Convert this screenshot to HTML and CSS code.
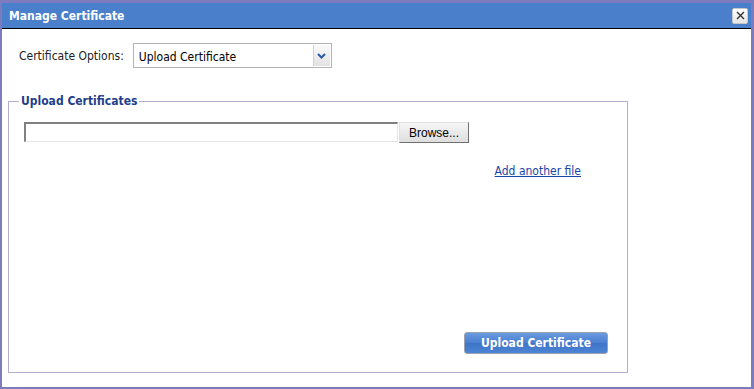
FILE: index.html
```html
<!DOCTYPE html>
<html lang="en">
<head>
    <meta charset="UTF-8">
    <title>Manage Certificate</title>
    <link rel="stylesheet" href="styles.css">
</head>
<body>

    <div class="window">
        <!-- Title bar -->
        <div class="titlebar">
            <span class="title">Manage Certificate</span>
            <span class="close">
                <svg width="9" height="9" viewBox="0 0 9 9"><path d="M1 1L8 8M8 1L1 8" stroke="#333" stroke-width="1.4"/></svg>
            </span>
        </div>

        <div class="content">
            <div class="options">
                <label>Certificate Options:</label>
                <div class="select">
                    <span class="select-text">Upload Certificate</span>
                    <span class="select-arrow">
                        <svg width="9" height="6" viewBox="0 0 9 6"><path d="M1 1L4.5 4.5L8 1" fill="none" stroke="#2b5aa8" stroke-width="2"/></svg>
                    </span>
                </div>
            </div>

            <fieldset class="upload">
                <legend>Upload Certificates</legend>
                <div class="file-row">
                    <div class="file-box"></div>
                    <button class="browse">Browse...</button>
                </div>
                <div class="add-row">
                    <a href="#" class="add-link">Add another file</a>
                </div>
                <div class="submit-row">
                    <button class="upload-btn">Upload Certificate</button>
                </div>
            </fieldset>
        </div>
    </div>

</body>
</html>
```

FILE: styles.css
```css
body {
    margin: 0;
    background-color: #7b7bbd;
    font-family: Tahoma, "DejaVu Sans Condensed", "Liberation Sans", sans-serif;
    font-size: 12px;
}
.window {
    margin: 3px 0 0 2px;
    width: 749px;
    height: 384px;
    background-color: #fff;
}
.titlebar {
    height: 25px;
    background-color: #4a7fcb;
    border-bottom: 1px solid #000;
    display: flex;
    align-items: center;
    justify-content: space-between;
    padding: 0 3px 0 7px;
}
.title {
    color: #fff;
    font-weight: bold;
    font-size: 12px;
}
.close {
    width: 14px;
    height: 14px;
    border: 1px solid #c8c8c8;
    border-radius: 2px;
    background: linear-gradient(#ffffff, #e4e4e4);
    display: flex;
    align-items: center;
    justify-content: center;
}
.content {
    padding-top: 14px;
}
.options {
    display: flex;
    align-items: center;
    padding-left: 17px;
    color: #222;
}
.select {
    margin-left: 9px;
    width: 197px;
    height: 23px;
    border: 1px solid #b4b4b4;
    display: flex;
    align-items: center;
    justify-content: space-between;
}
.select-text {
    padding: 2px 0 0 5px;
    color: #000;
}
.select-arrow {
    width: 16px;
    height: 21px;
    margin-right: 1px;
    border-left: 1px solid #d0d0d0;
    background: linear-gradient(#fafafa, #e2e2e2);
    display: flex;
    align-items: center;
    justify-content: center;
}
.upload {
    margin: 26px 0 0 6px;
    padding: 14px 15px 18px 15px;
    width: 588px;
    height: 245px;
    border: 1px solid #b0b0cc;
    display: flex;
    flex-direction: column;
}
.upload legend {
    padding: 0 2px;
    margin-left: -5px;
    color: #1f3f8a;
    font-weight: bold;
}
.file-row {
    display: flex;
}
.file-box {
    width: 371px;
    height: 17px;
    border-top: 2px solid #808080;
    border-left: 2px solid #808080;
    border-right: 1px solid #e4e4e4;
    border-bottom: 1px solid #e4e4e4;
}
.browse {
    margin-left: 1px;
    width: 70px;
    height: 21px;
    font-family: "Liberation Sans", Arial, sans-serif;
    font-size: 12px;
    color: #000;
    border: 1px solid #707070;
    border-top-color: #e0e0e0;
    border-left-color: #e0e0e0;
    background: linear-gradient(#f6f6f6, #dedede);
    padding: 0;
}
.add-row {
    display: flex;
    justify-content: flex-end;
    padding: 21px 31px 0 0;
}
.add-link {
    color: #1a45a8;
    text-decoration: underline;
}
.submit-row {
    margin-top: auto;
    display: flex;
    justify-content: flex-end;
    padding-right: 4px;
}
.upload-btn {
    width: 144px;
    height: 22px;
    border: 1px solid #9aa2b0;
    border-radius: 3px;
    background: linear-gradient(#6a9ae0, #4a7fd0 50%, #3f74c6 51%, #4d84d4);
    color: #fff;
    font-family: Tahoma, "DejaVu Sans Condensed", "Liberation Sans", sans-serif;
    font-size: 12px;
    font-weight: bold;
    padding: 0;
}
```
